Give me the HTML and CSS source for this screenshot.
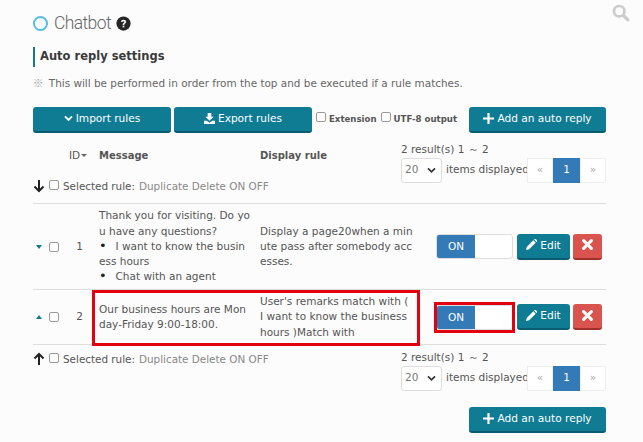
FILE: index.html
```html
<!DOCTYPE html>
<html lang="en">
<head>
<meta charset="utf-8">
<title>Chatbot</title>
<link rel="stylesheet" href="styles.css">
</head>
<body>
<main class="page">
  <svg class="search" viewBox="0 0 20 20"><circle cx="8" cy="8" r="5.8" fill="none" stroke="currentColor" stroke-width="3"/><path d="M12.5 12.5 17.5 17.5" stroke="currentColor" stroke-width="3.6" stroke-linecap="round"/></svg>
  <header class="title">
    <span class="ring"></span>
    <h1>Chatbot</h1>
    <svg class="help" viewBox="0 0 16 16"><circle cx="8" cy="8" r="7.6" fill="#262626"/><path d="M5.3 6.2C5.4 4.6 6.6 3.9 8 3.9c1.6 0 2.8.9 2.8 2.3 0 1.9-2 1.9-2 3.3H7.1c0-2.2 1.9-2.2 1.9-3.2 0-.5-.5-.8-1-.8-.6 0-1 .3-1.1 1z" fill="#fff"/><rect x="7.1" y="10.3" width="1.8" height="1.8" fill="#fff"/></svg>
  </header>
  <h2 class="section">Auto reply settings</h2>
  <p class="note"><span class="kome">※</span> This will be performed in order from the top and be executed if a rule matches.</p>

  <div class="toolbar">
    <button class="btn wide"><svg class="ico chev" viewBox="0 0 10 8"><path d="M1 1.5 5 5.5 9 1.5" fill="none" stroke="#fff" stroke-width="2.2"/></svg>Import rules</button>
    <button class="btn wide"><svg class="ico" viewBox="0 0 12 12"><path d="M4 0h4v4h2.5L6 8.5 1.500 4H4zM0 8.500h3L6 10.500l3-2h3V12H0z" fill="#fff"/></svg>Export rules</button>
    <label class="opt"><input type="checkbox">Extension</label>
    <label class="opt"><input type="checkbox">UTF-8 output</label>
    <button class="btn add"><svg class="ico" viewBox="0 0 10 10"><path d="M4 0h2v4h4v2H6v4H4V6H0V4h4z" fill="#fff"/></svg>Add an auto reply</button>
  </div>

  <div class="head">
    <div class="head-left">
      <div class="labels">
        <div class="h-id">ID<span class="caret"></span></div>
        <div class="h-msg">Message</div>
        <div class="h-rule">Display rule</div>
      </div>
      <div class="bulk">
        <svg class="arrow" viewBox="0 0 12 14"><path d="M6 1v11M1.500 7.500 6 12l4.500-4.500" fill="none" stroke="#222" stroke-width="2"/></svg>
        <input type="checkbox">
        <span>Selected rule:</span> <span class="muted">Duplicate Delete ON OFF</span>
      </div>
    </div>
    <div class="pager">
      <div class="count">2 result(s) 1 ～ 2</div>
      <div class="pager-row">
        <span class="select">20<svg viewBox="0 0 10 8"><path d="M1 1.500 5 5.500 9 1.500" fill="none" stroke="#333" stroke-width="2"/></svg></span>
        <span class="items">items displayed</span>
        <span class="pages"><span>«</span><span class="cur">1</span><span>»</span></span>
      </div>
    </div>
  </div>

  <div class="row first">
    <div class="c-sort"><span class="tri down"></span><input type="checkbox"></div>
    <div class="c-id">1</div>
    <div class="c-msg">Thank you for visiting. Do you have any questions?
      <ul><li>I want to know the business hours</li><li>Chat with an agent</li></ul>
    </div>
    <div class="c-rule">Display a page20when a minute pass after somebody accesses.</div>
    <div class="c-act">
      <span class="toggle"><b>ON</b></span>
      <button class="btn edit"><svg class="ico" viewBox="0 0 12 12"><path d="M0 12l.8-3.400L8 1.400 10.600 4 3.400 11.200zM8.800.600 9.400 0a1 1 0 0 1 1.200 0L12 1.400a1 1 0 0 1 0 1.200l-.6.6z" fill="#fff"/></svg>Edit</button>
      <button class="btn del"><svg viewBox="0 0 10 10"><path d="M1.500 1.500 8.500 8.500M8.500 1.500 1.500 8.500" stroke="#fff" stroke-width="2.800" stroke-linecap="round"/></svg></button>
    </div>
  </div>

  <div class="row second">
    <div class="c-sort"><span class="tri up"></span><input type="checkbox"></div>
    <div class="c-id">2</div>
    <div class="c-msg">Our business hours are Monday-Friday 9:00-18:00.</div>
    <div class="c-rule">User's remarks match with ( I want to know the business hours )Match with</div>
    <div class="c-act">
      <span class="toggle"><b>ON</b></span>
      <button class="btn edit"><svg class="ico" viewBox="0 0 12 12"><path d="M0 12l.8-3.400L8 1.400 10.600 4 3.400 11.200zM8.800.600 9.400 0a1 1 0 0 1 1.200 0L12 1.400a1 1 0 0 1 0 1.200l-.6.6z" fill="#fff"/></svg>Edit</button>
      <button class="btn del"><svg viewBox="0 0 10 10"><path d="M1.500 1.500 8.500 8.500M8.500 1.500 1.500 8.500" stroke="#fff" stroke-width="2.800" stroke-linecap="round"/></svg></button>
    </div>
    <span class="mark mark-text"></span>
    <span class="mark mark-toggle"></span>
  </div>

  <div class="foot">
    <div class="bulk">
      <svg class="arrow" viewBox="0 0 12 14"><path d="M6 13V2M1.500 6.500 6 2l4.500 4.500" fill="none" stroke="#222" stroke-width="2"/></svg>
      <input type="checkbox">
      <span>Selected rule:</span> <span class="muted">Duplicate Delete ON OFF</span>
    </div>
    <div class="pager">
      <div class="count">2 result(s) 1 ～ 2</div>
      <div class="pager-row">
        <span class="select">20<svg viewBox="0 0 10 8"><path d="M1 1.500 5 5.500 9 1.500" fill="none" stroke="#333" stroke-width="2"/></svg></span>
        <span class="items">items displayed</span>
        <span class="pages"><span>«</span><span class="cur">1</span><span>»</span></span>
      </div>
    </div>
  </div>

  <div class="bottom"><button class="btn add"><svg class="ico" viewBox="0 0 10 10"><path d="M4 0h2v4h4v2H6v4H4V6H0V4h4z" fill="#fff"/></svg>Add an auto reply</button></div>
</main>
</body>
</html>
```
FILE: styles.css
```css
* { box-sizing: border-box; }
html, body { margin: 0; height: 100%; background: #fcfcfc; overflow: hidden; }
body { font: 10.5px/15.3px "DejaVu Sans", Verdana, sans-serif; color: #555; }
.page { position: relative; width: 643px; height: 442px; padding: 14px 37px 0 33px; }
.search { position: absolute; left: 612px; top: 4px; width: 18px; height: 18px; color: #ccc; }

.title { display: flex; align-items: center; height: 19px; }
.ring { width: 15px; height: 15px; border: 2px solid #55bde0; border-radius: 50%; }
h1 { margin: 0 5px 0 6px; font: 300 17.500px/19px Roboto, "DejaVu Sans", sans-serif; letter-spacing: -.6px; color: #666; }
.help { width: 15px; height: 15px; }

.section { margin: 14px 0 0; height: 20px; padding-left: 5px; border-left: 2px solid #17778f; font: bold 11.500px/18px "DejaVu Sans", sans-serif; color: #3a3a3a; }
.note { margin: 8px 0 0; height: 15px; font-size: 10.450px; color: #666; white-space: nowrap; }
.kome { margin-right: 2px; font-family: "Noto Sans CJK JP", sans-serif; color: #999; }

.toolbar { display: flex; align-items: flex-start; margin-top: 17px; height: 26px; }
.btn { display: inline-flex; flex-shrink: 0; align-items: center; justify-content: center; gap: 3px; height: 26px; padding: 0 0 2px; border: 0; border-bottom: 2px solid #0b5c70; border-radius: 3px; background: #0f7c94; color: #fff; font: 10.600px "DejaVu Sans", sans-serif; }
.ico { width: 11px; height: 11px; }
.chev { width: 9px; height: 7px; }
.wide { width: 138px; margin-right: 3px; }
.add { width: 137px; margin-left: auto; }
.opt { display: flex; align-items: center; margin-top: 2px; margin-right: 3px; font: bold 8.600px/20px "DejaVu Sans", sans-serif; color: #555; white-space: nowrap; }
.opt input { width: 10px; height: 10px; margin: 0 3px 4px 1px; }
input[type=checkbox] { appearance: none; background: #fff; border: 1px solid #999; border-radius: 2px; }

.head { display: flex; justify-content: space-between; margin-top: 9px; height: 61px; }
.labels { display: flex; height: 35px; padding-top: 6px; }
.h-id, .h-msg, .h-rule { font-size: 10px; font-weight: bold; line-height: 15px; }
.h-id { width: 66px; padding-left: 36px; font-weight: normal; font-size: 10.500px; }
.h-msg { width: 161px; }
.caret { display: inline-block; margin: 0 0 2px 1px; border: 3px solid transparent; border-top-color: #666; border-bottom: 0; }

.pager { width: 205px; }
.count { height: 15px; }
.pager-row { display: flex; align-items: center; height: 26px; }
.select { display: flex; align-items: center; justify-content: space-between; width: 41px; height: 25px; padding: 0 5px 0 3px; background: #fff; border: 1px solid #ddd; border-radius: 3px; color: #777; }
.select svg { width: 9px; height: 7px; }
.items { width: 81px; margin-left: 4px; white-space: nowrap; }
.pages { display: flex; height: 25px; }
.pages span { display: flex; align-items: center; justify-content: center; width: 26px; background: #fff; border: 1px solid #eee; color: #aaa; }
.pages .cur { width: 27px; background: #337ab7; border-color: #337ab7; color: #fff; }

.bulk { display: flex; align-items: center; gap: 4px; height: 20px; font-size: 10.400px; white-space: pre; }
.bulk input { width: 10px; height: 10px; margin: 0 0 4px; }
.arrow { width: 12px; height: 14px; margin-bottom: 3px; }
.muted { color: #888; }

.row { position: relative; display: grid; grid-template-columns: 27px 32px 168px 168px 178px; align-items: center; border-top: 1px solid #ddd; }
.first { height: 86px; }
.second { height: 56px; border-bottom: 1px solid #ddd; }
.c-sort { display: flex; align-items: center; gap: 7px; padding-left: 3px; }
.c-sort input { width: 10px; height: 10px; margin: 0; }
.tri { width: 0; height: 0; border: 3px solid transparent; }
.tri.down { border-top: 4px solid #17778f; border-bottom: 0; }
.tri.up { border-bottom: 4px solid #17778f; border-top: 0; }
.c-id { padding-left: 7px; text-align: center; }
.c-msg { padding: 0 10px 0 7px; word-break: break-all; }
.c-rule { padding-right: 14px; word-break: break-all; }
ul { margin: 0; padding: 0; list-style: none; }
li::before { content: "•"; display: inline-block; width: 16.500px; color: #222; font-size: 13px; line-height: 0; }
.c-act { display: flex; align-items: center; padding-left: 8px; }
.toggle { display: block; width: 77px; height: 25px; background: #fff; border: 1px solid #ddd; border-radius: 3px; overflow: hidden; }
.toggle b { display: block; width: 38px; height: 23px; background: #337ab7; color: #fff; font-weight: normal; line-height: 23px; text-align: center; }
.edit { width: 53px; margin-left: 4px; }
.del { width: 29px; margin-left: 3px; background: #d9534f; border-bottom-color: #9e2f2b; }
.del svg { width: 11px; height: 11px; }

.mark { position: absolute; border: 3px solid #e3000f; pointer-events: none; }
.mark-text { left: 59px; top: 0; width: 328px; height: 56px; }
.mark-toggle { left: 401px; top: 12px; width: 81px; height: 31px; }

.foot { display: flex; justify-content: space-between; margin-top: 5px; height: 45px; }
.bottom { display: flex; justify-content: flex-end; margin-top: 12px; }
```
